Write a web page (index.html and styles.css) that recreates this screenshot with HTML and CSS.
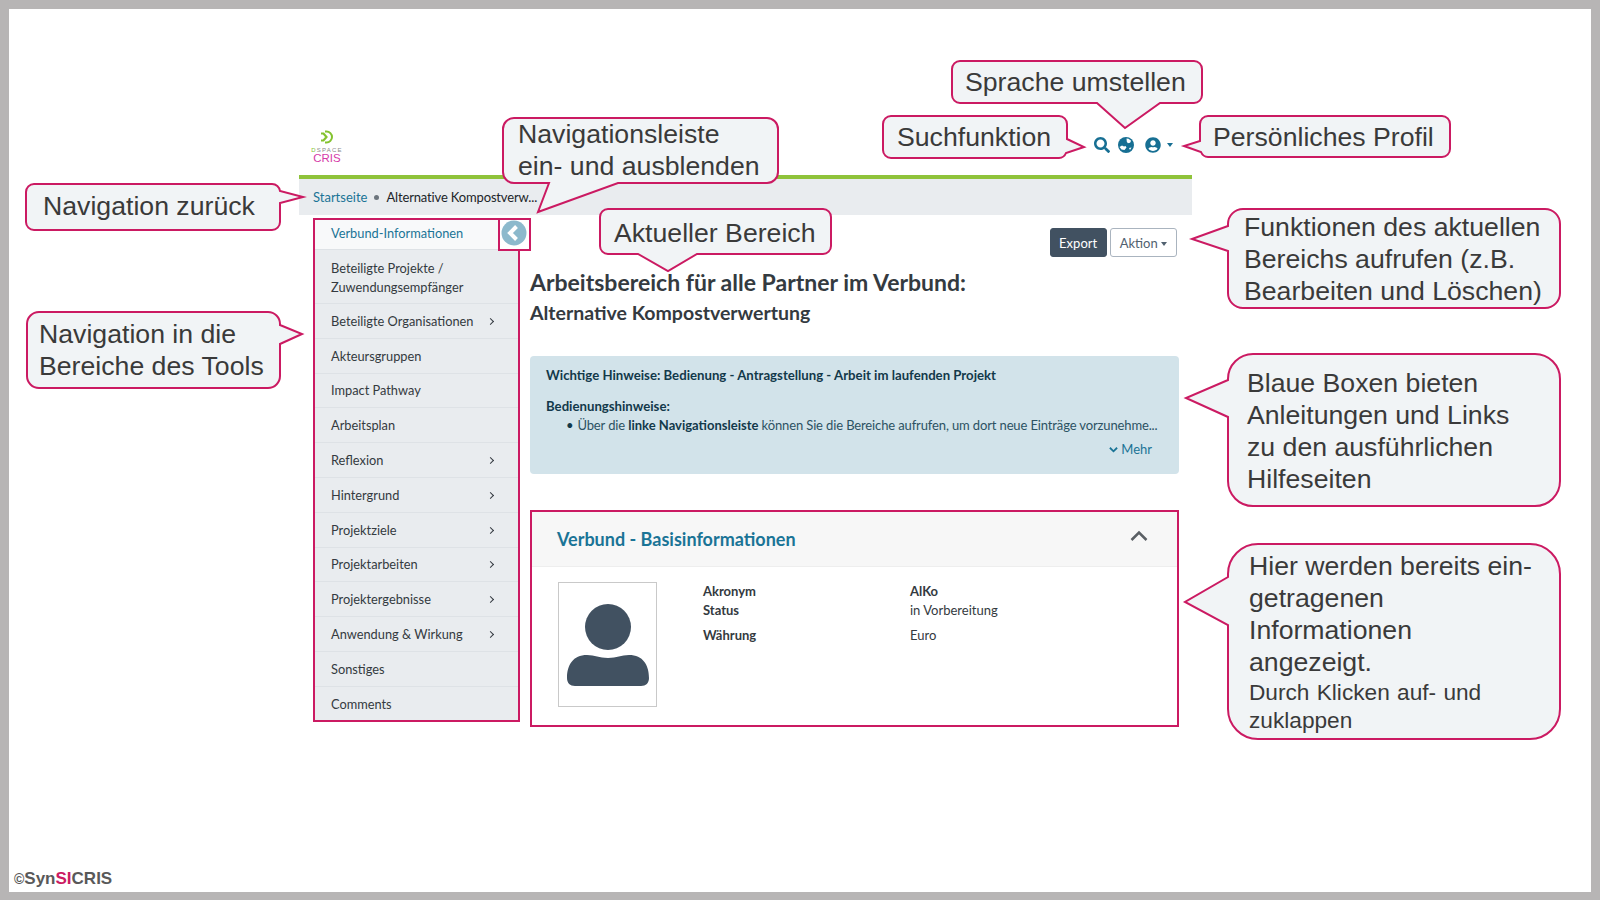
FILE: index.html
```html
<!DOCTYPE html>
<html lang="de">
<head>
    <meta charset="UTF-8">
    <title>Arbeitsbereich Verbund</title>
    <link rel="stylesheet" href="styles.css">
</head>
<body>
<div class="slide">

    <div class="screen">
        <header class="topbar">
            <div class="logo">
                <svg class="logo-mark" viewBox="0 0 14 14" width="14" height="14">
                    <path d="M6 1.500h1.500a5.500 5.500 0 0 1 0 11H6" fill="none" stroke="#84c32f" stroke-width="2"/>
                    <path d="M2 3.500h2.500L7.500 7l-3 3.500H2" fill="none" stroke="#84c32f" stroke-width="2.200"/>
                </svg>
                <span class="logo-dspace"><b>D</b>SPACE</span>
                <span class="logo-cris">CRIS</span>
            </div>
            <nav class="top-icons">
                <svg class="icon-search" viewBox="0 0 512 512" width="16" height="16"><path d="M505 442.700L405.300 343c-4.500-4.500-10.600-7-17-7H372c27.600-35.300 44-79.700 44-128C416 93.100 322.900 0 208 0S0 93.100 0 208s93.100 208 208 208c48.300 0 92.700-16.400 128-44v16.300c0 6.400 2.500 12.500 7 17l99.700 99.700c9.400 9.400 24.600 9.400 33.900 0l28.300-28.300c9.400-9.400 9.400-24.600.1-34zM208 336c-70.700 0-128-57.200-128-128 0-70.700 57.200-128 128-128 70.700 0 128 57.200 128 128 0 70.700-57.200 128-128 128z"/></svg>
                <svg viewBox="0 0 16 16" width="16" height="16"><circle cx="8" cy="8" r="8"/><path d="M8.500 1.600l2 .2 2.600 2-1 2-2.200.4-1.100-1.500zM1.500 10l2.500-1.500 2 1 1.500-.5 1 1.500-2 2.500-3-.5zM11 11l2.500-.5-1.500 2.500z" fill="#fff"/></svg>
                <span class="user-menu">
                    <svg viewBox="0 0 496 512" width="16" height="16"><path d="M248 8C111 8 0 119 0 256s111 248 248 248 248-111 248-248S385 8 248 8zm0 96c48.600 0 88 39.400 88 88s-39.400 88-88 88-88-39.400-88-88 39.400-88 88-88zm0 344c-58.700 0-111.300-26.600-146.500-68.200 18.800-35.400 55.600-59.800 98.500-59.800 2.400 0 4.800.4 7.100 1.100 13 4.200 26.600 6.900 40.900 6.900 14.300 0 28-2.700 40.900-6.900 2.300-.7 4.700-1.100 7.100-1.100 42.900 0 79.700 24.400 98.500 59.800C359.300 421.400 306.700 448 248 448z"/></svg>
                    <i class="caret"></i>
                </span>
            </nav>
        </header>

        <div class="breadcrumb">
            <a>Startseite</a>
            <span class="crumb-dot"></span>
            <span class="crumb-current">Alternative Kompostverw...</span>
        </div>

        <div class="main">
            <aside class="sidebar">
                <a class="nav-item active">Verbund-Informationen</a>
                <a class="nav-item">Beteiligte Projekte /<br>Zuwendungsempfänger</a>
                <a class="nav-item sub">Beteiligte Organisationen</a>
                <a class="nav-item">Akteursgruppen</a>
                <a class="nav-item">Impact Pathway</a>
                <a class="nav-item">Arbeitsplan</a>
                <a class="nav-item sub">Reflexion</a>
                <a class="nav-item sub">Hintergrund</a>
                <a class="nav-item sub">Projektziele</a>
                <a class="nav-item sub">Projektarbeiten</a>
                <a class="nav-item sub">Projektergebnisse</a>
                <a class="nav-item sub">Anwendung &amp; Wirkung</a>
                <a class="nav-item">Sonstiges</a>
                <a class="nav-item">Comments</a>
                <div class="nav-toggle">
                    <svg viewBox="0 0 26 26" width="26" height="26">
                        <circle cx="13" cy="13" r="12.500" fill="#8cb9cc"/>
                        <path d="M15.500 6.500L9 13l6.500 6.500" fill="none" stroke="#fff" stroke-width="4"/>
                    </svg>
                </div>
            </aside>

            <section class="content">
                <div class="actions">
                    <button class="btn btn-dark">Export</button>
                    <button class="btn btn-light">Aktion <i class="caret caret-dark"></i></button>
                </div>

                <h1>Arbeitsbereich für alle Partner im Verbund:</h1>
                <h2>Alternative Kompostverwertung</h2>

                <div class="hint">
                    <p class="hint-title">Wichtige Hinweise: Bedienung - Antragstellung - Arbeit im laufenden Projekt</p>
                    <p class="hint-sub">Bedienungshinweise:</p>
                    <ul>
                        <li>Über die <b>linke Navigationsleiste</b> können Sie die Bereiche aufrufen, um dort neue Einträge vorzunehme...</li>
                    </ul>
                    <div class="hint-more">
                        <svg viewBox="0 0 10 8" width="9" height="8"><path d="M1 1.500l4 4 4-4" fill="none" stroke="#1a7496" stroke-width="2"/></svg>
                        Mehr
                    </div>
                </div>

                <div class="card">
                    <div class="card-head">
                        <span>Verbund - Basisinformationen</span>
                        <svg viewBox="0 0 18 12" width="18" height="12"><path d="M1.500 10L9 2.500 16.500 10" fill="none" stroke="#5a5f64" stroke-width="2.500"/></svg>
                    </div>
                    <div class="card-body">
                        <div class="avatar">
                            <svg viewBox="0 0 82 82" width="82" height="82">
                                <circle cx="41" cy="23" r="23" fill="#415161"/>
                                <path d="M0 74C0 61 6 51 20 51c8 0 12 3 21 3s13-3 21-3c14 0 20 10 20 23 0 5-3 8-8 8H8c-5 0-8-3-8-8z" fill="#415161"/>
                            </svg>
                        </div>
                        <dl class="fields">
                            <dt>Akronym</dt><dd><b>AlKo</b></dd>
                            <dt>Status</dt><dd>in Vorbereitung</dd>
                            <dt class="gap">Währung</dt><dd class="gap">Euro</dd>
                        </dl>
                    </div>
                </div>
            </section>
        </div>
    </div>

    <!-- Sprechblasen der Folie -->
    <svg class="bubbles" viewBox="0 0 1600 900" width="1600" height="900">
        <path d="M34 184H272A8 8 0 0 1 280 191L303 197L280 203V222A8 8 0 0 1 272 230H34A8 8 0 0 1 26 222V192A8 8 0 0 1 34 184Z"/>
        <path d="M39 312H268A12 12 0 0 1 280 324V325L302 334L280 344V376A12 12 0 0 1 268 388H39A12 12 0 0 1 27 376V324A12 12 0 0 1 39 312Z"/>
        <path d="M514 118H767A11 11 0 0 1 778 129V172A11 11 0 0 1 767 183H618L538 212L549 183H514A11 11 0 0 1 503 172V129A11 11 0 0 1 514 118Z"/>
        <path d="M608 209H823A8 8 0 0 1 831 217V246A8 8 0 0 1 823 254H697L668 271L638 254H608A8 8 0 0 1 600 246V217A8 8 0 0 1 608 209Z"/>
        <path d="M960 61H1194A8 8 0 0 1 1202 69V95A8 8 0 0 1 1194 103H1160L1125 128L1097 103H960A8 8 0 0 1 952 95V69A8 8 0 0 1 960 61Z"/>
        <path d="M891 116H1059A8 8 0 0 1 1067 124V139L1084 147L1066 153A8 8 0 0 1 1059 158H891A8 8 0 0 1 883 150V124A8 8 0 0 1 891 116Z"/>
        <path d="M1208 116H1442A8 8 0 0 1 1450 124V149A8 8 0 0 1 1442 157H1208A8 8 0 0 1 1201 152L1184 146L1200 141V124A8 8 0 0 1 1208 116Z"/>
        <path d="M1243 209H1545A15 15 0 0 1 1560 224V293A15 15 0 0 1 1545 308H1243A15 15 0 0 1 1228 293V251L1192 239L1228 226V224A15 15 0 0 1 1243 209Z"/>
        <path d="M1253 354H1535A25 25 0 0 1 1560 379V481A25 25 0 0 1 1535 506H1253A25 25 0 0 1 1228 481V417L1186 398L1228 380V379A25 25 0 0 1 1253 354Z"/>
        <path d="M1258 544H1530A30 30 0 0 1 1560 574V709A30 30 0 0 1 1530 739H1258A30 30 0 0 1 1228 709V625L1185 602L1228 577V574A30 30 0 0 1 1258 544Z"/>
    </svg>

    <div class="note note-back">Navigation zurück</div>
    <div class="note note-tools">Navigation in die<br>Bereiche des Tools</div>
    <div class="note note-nav">Navigationsleiste<br>ein- und ausblenden</div>
    <div class="note note-current">Aktueller Bereich</div>
    <div class="note note-lang">Sprache umstellen</div>
    <div class="note note-search">Suchfunktion</div>
    <div class="note note-profile">Persönliches Profil</div>
    <div class="note note-functions">Funktionen des aktuellen<br>Bereichs aufrufen (z.B.<br>Bearbeiten und Löschen)</div>
    <div class="note note-blue">Blaue Boxen bieten<br>Anleitungen und Links<br>zu den ausführlichen<br>Hilfeseiten</div>
    <div class="note note-here">Hier werden bereits ein-<br>getragenen<br>Informationen<br>angezeigt.<span class="note-small">Durch Klicken auf- und<br>zuklappen</span></div>

    <div class="copyright"><small>©</small>Syn<em>SI</em>CRIS</div>
</div>
</body>
</html>
```

FILE: styles.css
```css
body {
    margin: 0;
    font-family: "Lato", sans-serif;
    color: #343a40;
}

.slide {
    position: relative;
    box-sizing: border-box;
    width: 1600px;
    height: 900px;
    padding: 110px 0 0 299px;
    background: #fff;
    box-shadow: inset 9px 9px 0 #b7b5b5, inset -9px -8px 0 #b7b5b5;
    overflow: hidden;
}

.screen {
    width: 893px;
}

/* header */
.topbar {
    display: flex;
    justify-content: space-between;
    align-items: flex-end;
    box-sizing: border-box;
    height: 69px;
    border-bottom: 4px solid #8fc33a;
}

.logo {
    display: flex;
    flex-direction: column;
    align-items: center;
    width: 32px;
    margin: 0 0 12px 12px;
    line-height: 1;
}

.logo-mark {
    margin: 0 2px 3px 0;
}

.logo-dspace {
    font: 6px "Liberation Sans", sans-serif;
    letter-spacing: 1.2px;
    color: #8a8a8a;
}

.logo-dspace b {
    color: #84c32f;
    font-weight: normal;
}

.logo-cris {
    font: 11.500px/10px "Liberation Sans", sans-serif;
    color: #d63ca8;
}

.top-icons {
    display: flex;
    align-items: center;
    gap: 10px;
    margin: 0 19px 22px 0;
    fill: #176f93;
}

.icon-search {
    margin-right: -2px;
}

.user-menu {
    display: flex;
    align-items: center;
    gap: 6px;
    margin-left: 1px;
}

.top-icons svg {
    display: block;
}

.caret {
    display: inline-block;
    width: 0;
    height: 0;
    border-style: solid;
    border-width: 4px 3.500px 0;
    border-color: #176f93 transparent transparent;
}

.caret-dark {
    border-color: #516170 transparent transparent;
    vertical-align: 2px;
}

.breadcrumb {
    display: flex;
    align-items: center;
    gap: 7px;
    height: 36px;
    padding-left: 14px;
    background: #e9ecef;
    font-size: 13px;
    color: #212529;
}

.breadcrumb a {
    color: #1a7496;
}

.crumb-dot {
    width: 5px;
    height: 5px;
    border-radius: 50%;
    background: #6c757d;
}

.crumb-current {
    letter-spacing: -0.15px;
}

/* sidebar + content */
.main {
    display: flex;
}

.sidebar {
    position: relative;
    flex: none;
    box-sizing: border-box;
    width: 207px;
    height: 504px;
    margin: 3px 0 0 14px;
    border: 2px solid #cb1a62;
    background: #e9ecef;
    font-size: 12.800px;
    color: #343a40;
}

.nav-item {
    display: flex;
    align-items: center;
    box-sizing: border-box;
    height: 34.800px;
    padding: 1px 0 0 16px;
    border-bottom: 1px solid #dee2e6;
    line-height: 19px;
}

.nav-item:nth-child(2) {
    display: block;
    height: 54px;
    padding-top: 9px;
}

.nav-item.active {
    height: 30px;
    padding: 0 0 2px 16px;
    background: #f8f9fa;
    color: #1a7496;
}

.nav-item:nth-child(14) {
    border-bottom: 0;
}

.nav-item.sub::after {
    content: "";
    width: 4px;
    height: 4px;
    margin-left: auto;
    margin-right: 25px;
    border-top: 1.300px solid #343a40;
    border-right: 1.300px solid #343a40;
    transform: rotate(45deg);
}

.nav-toggle {
    position: absolute;
    top: -2px;
    left: 183px;
    display: flex;
    align-items: center;
    justify-content: center;
    box-sizing: border-box;
    width: 33px;
    height: 33px;
    padding: 0 1px 3px 0;
    border: 2px solid #cb1a62;
    background: #fff;
}

.content {
    flex: 1;
    min-width: 0;
    padding: 13px 13px 0 10px;
}

.actions {
    display: flex;
    justify-content: flex-end;
    gap: 3px;
    margin-right: 2px;
}

.btn {
    height: 29px;
    padding: 0 9px;
    border-radius: 3px;
    font: 13px "Lato", sans-serif;
}

.btn-dark {
    padding: 0 8.500px;
    border: 1px solid #415161;
    background: #415161;
    color: #fff;
}

.btn-light {
    border: 1px solid #aab4bf;
    background: #fff;
    color: #516170;
}

h1 {
    margin: 11px 0 0;
    font-size: 23px;
    line-height: 28px;
}

h2 {
    margin: 4px 0 0;
    font-size: 19.500px;
    line-height: 26px;
}

.hint {
    box-sizing: border-box;
    height: 118px;
    margin-top: 30px;
    padding: 10px 27px 0 16px;
    border-radius: 4px;
    background: #d2e3ea;
    font-size: 13px;
    line-height: 19px;
    color: #2c5263;
}

.hint p {
    margin: 0;
    font-size: 13.200px;
    font-weight: bold;
    color: #12394a;
}

.hint p.hint-sub {
    padding-top: 12px;
}

.hint ul {
    margin: 0;
    padding-left: 20px;
    list-style: none;
    white-space: nowrap;
    letter-spacing: -0.13px;
}

.hint li::before {
    content: "•";
    margin-right: 4px;
    color: #12394a;
}

.hint li b {
    letter-spacing: 0;
    color: #12394a;
}

.hint-more {
    margin-top: 5px;
    text-align: right;
    color: #1a7496;
}

.card {
    box-sizing: border-box;
    height: 217px;
    margin-top: 36px;
    border: 2px solid #cb1a62;
}

.card-head {
    display: flex;
    justify-content: space-between;
    align-items: center;
    box-sizing: border-box;
    height: 55px;
    padding: 0 29px 0 25px;
    border-bottom: 1px solid #eeeeee;
    background: #f7f7f7;
    font-size: 18px;
    font-weight: bold;
    color: #1a7496;
}

.card-head svg {
    margin-bottom: 6px;
}

.card-body {
    display: flex;
    padding: 15px 0 0 26px;
}

.avatar {
    display: flex;
    align-items: center;
    justify-content: center;
    box-sizing: border-box;
    width: 99px;
    height: 125px;
    border: 1px solid #c9c9c9;
}

.fields {
    display: grid;
    grid-template-columns: 207px 1fr;
    grid-auto-rows: min-content;
    margin: 0 0 0 46px;
    font-size: 13px;
    line-height: 19px;
}

.fields dt {
    font-weight: bold;
}

.fields dd {
    margin: 0;
}

.fields .gap {
    margin-top: 6px;
}

/* annotations on top of the screenshot */
.bubbles {
    position: absolute;
    top: 0;
    left: 0;
    fill: #f1f4f6;
    stroke: #cb1a62;
    stroke-width: 2;
}

.note {
    position: absolute;
    font: 26.670px/32px "Liberation Sans", sans-serif;
    color: #3a3a3a;
    white-space: nowrap;
}

.note-back { left: 43px; top: 190px; }
.note-tools { left: 39px; top: 318px; }
.note-nav { left: 518px; top: 118px; }
.note-current { left: 614px; top: 217px; }
.note-lang { left: 965px; top: 66px; }
.note-search { left: 897px; top: 121px; }
.note-profile { left: 1213px; top: 121px; }
.note-functions { left: 1244px; top: 211px; }
.note-blue { left: 1247px; top: 367px; }
.note-here { left: 1249px; top: 550px; }

.note-small {
    display: block;
    font-size: 22.670px;
    line-height: 28px;
    word-spacing: 1px;
}

.copyright {
    position: absolute;
    left: 14px;
    bottom: 11px;
    font: bold 17px "Liberation Sans", sans-serif;
    color: #595959;
}

.copyright small {
    font-size: 14px;
}

.copyright em {
    font-style: normal;
    color: #cb1a62;
}
```
